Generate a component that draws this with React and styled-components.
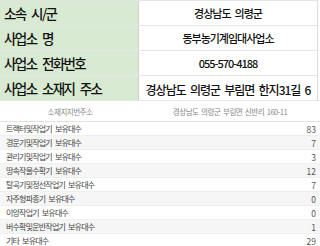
import styled, { createGlobalStyle } from 'styled-components';

const Global = createGlobalStyle`
    html, body {
        margin: 0;
        padding: 0;
        background: #ffffff;
    }
    body {
        font-family: "Noto Sans CJK KR", "Noto Sans", sans-serif;
    }
`;

const Pagina = styled.div`
    width: 320px;
    height: 246px;
    overflow: hidden;
    background: #ffffff;
`;

const TabelaInfo = styled.div`
    width: 318px;
    border-top: 1px solid #e4e4e4;
    border-right: 1px solid #dcdcdc;
    box-sizing: border-box;
`;

const LinhaInfo = styled.div`
    display: grid;
    grid-template-columns: 139px 1fr;
    height: 25px;
    border-bottom: 1px solid #e6e6e6;
    box-sizing: border-box;

    &:last-child {
        border-bottom: none;
        height: 24px;
    }
`;

const Rotulo = styled.div`
    background: #d9ead3;
    border-right: 1px solid #c9d6c4;
    display: flex;
    align-items: center;
    padding-left: 4px;
    font-size: 13.5px;
    font-weight: 500;
    letter-spacing: -1.6px;
    word-spacing: 4px;
    color: #111;
    white-space: nowrap;
`;

const Valor = styled.div`
    display: flex;
    align-items: center;
    justify-content: center;
    font-size: ${p => (p.$grande ? '12px' : '11px')};
    font-weight: 500;
    letter-spacing: -1px;
    word-spacing: 2.5px;
    padding-top: ${p => (p.$grande ? '3px' : '0')};
    color: #111;
    white-space: nowrap;
`;

const TabelaDados = styled.div`
    width: 320px;
    border-top: 1px solid #e8e8e8;
`;

const Cabecalho = styled.div`
    display: grid;
    grid-template-columns: 140px 1fr;
    height: 20px;
    align-items: center;
    border-bottom: 1px solid #e2e2e2;
    font-size: 7.5px;
    letter-spacing: -0.5px;
    word-spacing: 1.5px;
    color: #888;
    text-align: center;
    white-space: nowrap;
`;

const LinhaDados = styled.div`
    display: flex;
    justify-content: space-between;
    align-items: center;
    height: 14px;
    padding: 0 4px 0 6px;
    font-size: 8px;
    letter-spacing: -0.8px;
    word-spacing: 2px;
    color: #444;
    background: ${p => (p.$listrada ? '#f6f6f6' : '#ffffff')};
    border-bottom: 1px solid #efefef;
    box-sizing: border-box;
    white-space: nowrap;
`;

const Numero = styled.span`
    color: #555;
    font-size: 8.5px;
    letter-spacing: 0;
`;

const info = [
    ['소속 시/군', '경상남도 의령군'],
    ['사업소 명', '동부농기계임대사업소'],
    ['사업소 전화번호', '055-570-4188'],
    ['사업소 소재지 주소', '경상남도 의령군 부림면 한지31길 6'],
];

const dados = [
    ['트랙터및작업기 보유대수', 83],
    ['경운기및작업기 보유대수', 7],
    ['관리기및작업기 보유대수', 3],
    ['땅속작물수확기 보유대수', 12],
    ['탈곡기및정선작업기 보유대수', 7],
    ['자주형파종기 보유대수', 0],
    ['이앙작업기 보유대수', 0],
    ['버수확및운반작업기 보유대수', 1],
    ['기타 보유대수', 29],
];

function App() {
    return (
        <Pagina>
            <Global />
            <TabelaInfo>
                {info.map(([rotulo, valor], i) => (
                    <LinhaInfo key={rotulo}>
                        <Rotulo>{rotulo}</Rotulo>
                        <Valor $grande={i === 3}>{valor}</Valor>
                    </LinhaInfo>
                ))}
            </TabelaInfo>
            <TabelaDados>
                <Cabecalho>
                    <span>소재지지번주소</span>
                    <span>경상남도 의령군 부림면 신반리 160-11</span>
                </Cabecalho>
                {dados.map(([nome, qtd], i) => (
                    <LinhaDados key={nome} $listrada={i % 2 === 1}>
                        <span>{nome}</span>
                        <Numero>{qtd}</Numero>
                    </LinhaDados>
                ))}
            </TabelaDados>
        </Pagina>
    );
}

export default App;
